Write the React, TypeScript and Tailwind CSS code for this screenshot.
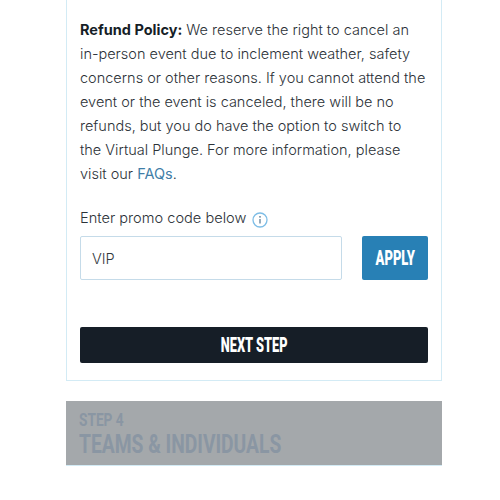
export default function App() {
  return (
    <div className="w-[500px] h-[500px] bg-white font-['Inter','Liberation_Sans',sans-serif] text-[#2c3238]">
      <div className="ml-[66px] w-[376px]">
        {/* Step 3 card */}
        <div className="border-x border-b border-[#d3ebf5] pt-[18px] pb-[17px] px-[13px]">
          <p className="text-[14.5px] leading-[24px] font-light">
            <strong className="font-bold text-[#161e27]">Refund Policy:</strong> We reserve the right to cancel an
            in-person event due to inclement weather, safety concerns or other reasons. If you cannot attend the event
            or the event is canceled, there will be no refunds, but you do have the option to switch to
            <br />
            the Virtual Plunge. For more information, please visit our <a className="text-[#3f7ea8] font-normal">FAQs</a>.
          </p>

          <div className="mt-[22px] flex items-center gap-[6px] h-[22px] text-[14.6px] font-light">
            <span>Enter promo code below</span>
            <svg width="16" height="16" viewBox="0 0 16 16" fill="none" className="text-[#7dbde6] mt-[2px]">
              <circle cx="8" cy="8" r="7" stroke="currentColor" strokeWidth="1.3" />
              <circle cx="8" cy="4.8" r="0.9" fill="#5c7f99" />
              <path d="M8 7v4.6" stroke="#5c7f99" strokeWidth="1.3" />
            </svg>
          </div>

          <div className="mt-[6px] flex gap-[20px]">
            <input
              readOnly
              value="VIP"
              className="w-[262px] h-[44px] rounded-[2px] border border-[#c5dbe9] px-[11px] text-[14.5px] font-light text-[#33383e] outline-none"
            />
            <button className="w-[66px] h-[44px] rounded-[2px] bg-[#2880b5] text-white font-['Roboto','Liberation_Sans',sans-serif] font-black text-[20px]">
              <span className="inline-block scale-x-[0.65]">APPLY</span>
            </button>
          </div>

          <button className="mt-[47px] block w-[348px] h-[36px] rounded-[2px] bg-[#161e27] text-white font-['Roboto','Liberation_Sans',sans-serif] font-black text-[20px]">
            <span className="inline-block scale-x-[0.64]">NEXT STEP</span>
          </button>
        </div>

        {/* Step 4 collapsed header */}
        <div className="mt-[20px] h-[65px] bg-[#a4a8ab] border-b border-[#d3ebf5] pl-[13px] pt-[9px] text-[#8a96a3] font-['Roboto','Liberation_Sans',sans-serif] font-bold whitespace-nowrap">
          <div className="text-[19px] leading-[20px] origin-left scale-x-[0.72]">STEP 4</div>
          <div className="text-[26px] leading-[28px] origin-left scale-x-[0.74]">TEAMS &amp; INDIVIDUALS</div>
        </div>
      </div>
    </div>
  );
}
